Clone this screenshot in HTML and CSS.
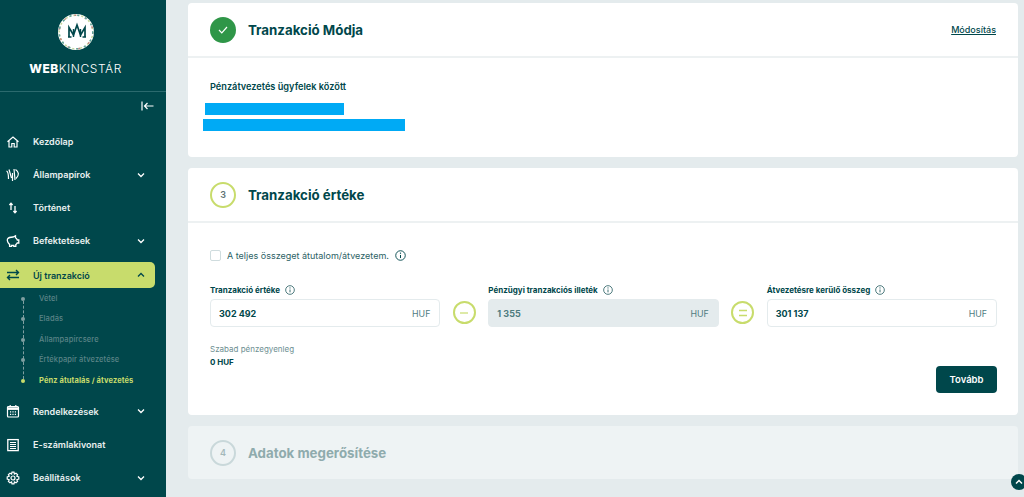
FILE: index.html
```html
<!DOCTYPE html>
<html lang="hu">
<head>
    <meta charset="UTF-8">
    <meta name="viewport" content="width=device-width, initial-scale=1.0">
    <title>WebKincstár</title>
    <link rel="stylesheet" href="styles.css">
</head>
<body>

<aside class="sidebar">
    <div class="brand">
        <svg class="brand-logo" width="38" height="38" viewBox="0 0 38 38">
            <circle cx="19" cy="19" r="18" fill="#fff"/>
            <circle cx="19" cy="19" r="16.8" fill="none" stroke="#c5d89a" stroke-width="1.5" stroke-dasharray="2 2"/>
            <circle cx="19" cy="19" r="16.8" fill="none" stroke="#c08a80" stroke-width="1.5" stroke-dasharray="2 9"/>
            <circle cx="19" cy="19" r="16.8" fill="none" stroke="#5ea3a0" stroke-width="1.5" stroke-dasharray="2 6"/>
            <path d="M12 24V14.5L16.5 22L20 12L23.5 22L28 14.5V24" fill="none" stroke="#00474b" stroke-width="1.7"/>
            <path d="M11 24H14.5M25.5 24H29M16.5 16V24M23.5 16V24" fill="none" stroke="#00474b" stroke-width="1.4"/>
        </svg>
        <div class="brand-name"><b>WEB</b>KINCSTÁR</div>
    </div>

    <div class="collapse-row">
        <svg width="13" height="10" viewBox="0 0 13 10" fill="none" stroke="#fff" stroke-width="1.2">
            <path d="M1 0.5V9.5M12.5 5H3.5M6.5 2L3.5 5L6.5 8"/>
        </svg>
    </div>

    <nav>
        <a class="nav-item">
            <svg class="nav-icon" viewBox="0 0 14 14" fill="none" stroke="#fff" stroke-width="1.2">
                <path d="M1.5 6.8L7 2L12.5 6.8M3 5.8V12H5.8V8.5H8.2V12H11V5.8"/>
            </svg>
            <span class="nav-label">Kezdőlap</span>
        </a>
        <a class="nav-item">
            <svg class="nav-icon" viewBox="0 0 14 14" fill="none" stroke="#fff" stroke-width="1.2">
                <path d="M0.5 3C2 3.5 2.5 6 2.5 11M3 1.5L5.5 10M6.5 5V13M8 1L9 12M9.5 1.5C13 4 13.5 7 10 10.5"/>
            </svg>
            <span class="nav-label">Állampapírok</span>
            <svg class="chevron" viewBox="0 0 8 6" fill="none" stroke="#fff" stroke-width="1.3"><path d="M1 1.5L4 4.5L7 1.5"/></svg>
        </a>
        <a class="nav-item">
            <svg class="nav-icon" viewBox="0 0 14 14" fill="none" stroke="#fff" stroke-width="1.3">
                <path d="M5 9V2.5M3.4 4L5 2.2L6.6 4M9 5V11.5M7.4 10L9 11.8L10.6 10"/>
            </svg>
            <span class="nav-label">Történet</span>
        </a>
        <a class="nav-item">
            <svg class="nav-icon" viewBox="0 0 14 14" fill="none" stroke="#fff" stroke-width="1.3">
                <path d="M1.5 5C2.5 3.5 5 3 7 3L9.5 1.8V3.8C10.5 4.4 11 5.2 11.3 6H12.8V9H11.2C10.8 9.8 10.3 10.3 9.8 10.6V12.3H7.8V11.3H5.6V12.3H3.6V10.4C2.2 9.4 0.8 6.6 1.5 5Z"/>
            </svg>
            <span class="nav-label">Befektetések</span>
            <svg class="chevron" viewBox="0 0 8 6" fill="none" stroke="#fff" stroke-width="1.3"><path d="M1 1.5L4 4.5L7 1.5"/></svg>
        </a>
        <div class="nav-active-row">
            <a class="nav-item nav-item-active">
                <svg class="nav-icon" viewBox="0 0 14 14" fill="none" stroke="#00474b" stroke-width="1.4">
                    <path d="M1 4.5H12.5M10 2L12.5 4.5L10 7M13 9.5H1.5M4 7L1.5 9.5L4 12"/>
                </svg>
                <span class="nav-label">Új tranzakció</span>
                <svg class="chevron" viewBox="0 0 8 6" fill="none" stroke="#00474b" stroke-width="1.3"><path d="M1 4.5L4 1.5L7 4.5"/></svg>
            </a>
        </div>
        <ul class="subnav">
            <li class="subnav-item">Vétel</li>
            <li class="subnav-item">Eladás</li>
            <li class="subnav-item">Állampapírcsere</li>
            <li class="subnav-item">Értékpapír átvezetése</li>
            <li class="subnav-item subnav-item-active">Pénz átutalás / átvezetés</li>
        </ul>
        <a class="nav-item">
            <svg class="nav-icon" viewBox="0 0 14 14" fill="none" stroke="#fff" stroke-width="1.2">
                <rect x="1.5" y="2.5" width="11" height="10.5" rx="1"/>
                <path d="M1.5 4.6H12.5" stroke-width="2.6"/>
                <path d="M4.2 1V3M9.8 1V3"/>
                <path d="M4 7.8H5.2M6.4 7.8H7.6M8.8 7.8H10M4 10.4H5.2M6.4 10.4H7.6M8.8 10.4H10"/>
            </svg>
            <span class="nav-label">Rendelkezések</span>
            <svg class="chevron" viewBox="0 0 8 6" fill="none" stroke="#fff" stroke-width="1.3"><path d="M1 1.5L4 4.5L7 1.5"/></svg>
        </a>
        <a class="nav-item">
            <svg class="nav-icon" viewBox="0 0 14 14" fill="none" stroke="#fff" stroke-width="1.3">
                <rect x="1.8" y="1.6" width="10.4" height="11"/>
                <path d="M4 4.5H10M4 6.5H10M4 8.5H10M4 10.5H10" stroke-width="1.1"/>
            </svg>
            <span class="nav-label">E-számlakivonat</span>
        </a>
        <a class="nav-item">
            <svg class="nav-icon" viewBox="0 0 14 14" fill="none" stroke="#fff" stroke-width="1.2">
                <circle cx="7" cy="7" r="2"/>
                <path d="M6 1.2H8L8.4 3L10 2.2L11.6 3.6L10.8 5.2L12.8 6V8L10.8 8.8L11.6 10.4L10 11.8L8.4 11L8 12.8H6L5.6 11L4 11.8L2.4 10.4L3.2 8.8L1.2 8V6L3.2 5.2L2.4 3.6L4 2.2L5.6 3Z"/>
            </svg>
            <span class="nav-label">Beállítások</span>
            <svg class="chevron" viewBox="0 0 8 6" fill="none" stroke="#fff" stroke-width="1.3"><path d="M1 1.5L4 4.5L7 1.5"/></svg>
        </a>
    </nav>
</aside>

<main class="content">

    <section class="card">
        <header class="card-header">
            <span class="step step-done">
                <svg width="10" height="8" viewBox="0 0 10 8" fill="none" stroke="#fff" stroke-width="1.2"><path d="M1 4L3.8 6.8L9 1"/></svg>
            </span>
            <h2 class="card-title">Tranzakció Módja</h2>
            <a class="edit-link">Módosítás</a>
        </header>
        <div class="method-body">
            <p class="method-name">Pénzátvezetés ügyfelek között</p>
            <div class="mask mask-short"></div>
            <div class="mask mask-long"></div>
        </div>
    </section>

    <section class="card">
        <header class="card-header">
            <span class="step step-current">3</span>
            <h2 class="card-title">Tranzakció értéke</h2>
        </header>
        <div class="value-body">
            <div class="check-row">
                <span class="checkbox"></span>
                <span class="check-label">A teljes összeget átutalom/átvezetem.</span>
                <svg class="info info-large" viewBox="0 0 12 12"><use href="#info"/></svg>
            </div>

            <div class="fields">
                <div class="field">
                    <label class="field-label">Tranzakció értéke <svg class="info" viewBox="0 0 12 12"><use href="#info"/></svg></label>
                    <div class="input"><b>302 492</b><span class="unit">HUF</span></div>
                </div>
                <span class="operator">
                    <svg width="10" height="8" viewBox="0 0 10 8" stroke="#c8dc6c" stroke-width="1.2"><path d="M1 4H9"/></svg>
                </span>
                <div class="field">
                    <label class="field-label">Pénzügyi tranzakciós illeték <svg class="info" viewBox="0 0 12 12"><use href="#info"/></svg></label>
                    <div class="input input-disabled"><b>1 355</b><span class="unit">HUF</span></div>
                </div>
                <span class="operator">
                    <svg width="12" height="8" viewBox="0 0 12 8" stroke="#c8dc6c" stroke-width="1.6"><path d="M2 1.5H10M2 6.5H10"/></svg>
                </span>
                <div class="field">
                    <label class="field-label">Átvezetésre kerülő összeg <svg class="info" viewBox="0 0 12 12"><use href="#info"/></svg></label>
                    <div class="input"><b>301 137</b><span class="unit">HUF</span></div>
                </div>
            </div>

            <div class="balance-row">
                <div class="balance">
                    <div class="balance-label">Szabad pénzegyenleg</div>
                    <div class="balance-value">0 HUF</div>
                </div>
                <button class="next-btn">Tovább</button>
            </div>
        </div>
    </section>

    <section class="card card-disabled">
        <header class="card-header card-header-plain">
            <span class="step step-todo">4</span>
            <h2 class="card-title">Adatok megerősítése</h2>
        </header>
    </section>
</main>

<button class="to-top">
    <svg width="8" height="6" viewBox="0 0 8 6" fill="none" stroke="#fff" stroke-width="1.5"><path d="M1 4.5L4 1.5L7 4.5"/></svg>
</button>

<svg class="sprite" width="0" height="0">
    <symbol id="info" viewBox="0 0 12 12">
        <circle cx="6" cy="6" r="5.2" fill="none" stroke="currentColor" stroke-width="1"/>
        <path d="M6 5.4V8.8" stroke="currentColor" stroke-width="1.1"/>
        <circle cx="6" cy="3.5" r="0.7" fill="currentColor"/>
    </symbol>
</svg>

</body>
</html>
```

FILE: styles.css
```css
/* Basic Reset */
* {
    margin: 0;
    padding: 0;
    box-sizing: border-box;
}

body {
    font-family: Inter, "Noto Sans", sans-serif;
    background-color: #e4ebed;
    color: #00474b;
    display: flex;
    height: 497px;
    overflow: hidden;
}

/* Sidebar */
.sidebar {
    width: 166px;
    flex-shrink: 0;
    background-color: #00474b;
    color: #fff;
}

.brand {
    height: 92px;
    border-bottom: 1px solid #2b6a6e;
    padding-top: 13px;
    padding-right: 15px;
    display: flex;
    flex-direction: column;
    align-items: center;
}

.brand-name {
    margin-top: 10px;
    font-size: 12px;
    line-height: 15px;
    letter-spacing: 0.55px;
    font-weight: 300;
}

.brand-name b {
    font-weight: 800;
}

.collapse-row {
    height: 33px;
    display: flex;
    justify-content: flex-end;
    align-items: center;
    padding-right: 12px;
    padding-bottom: 6px;
}

.nav-item {
    height: 33px;
    display: flex;
    align-items: center;
    padding-left: 6px;
    font-size: 9px;
    font-weight: 600;
    color: #e9f0f0;
}

.nav-icon {
    width: 14px;
    height: 14px;
    margin-right: 13px;
    flex-shrink: 0;
}

.nav-label {
    flex: 1;
}

.chevron {
    width: 8px;
    height: 6px;
    margin-right: 21px;
}

.nav-active-row {
    height: 31px;
    padding-top: 5px;
}

.nav-item-active {
    width: 155px;
    height: 26px;
    background-color: #c8dc6c;
    border-radius: 0 5px 5px 0;
    color: #00474b;
}

.nav-item-active .chevron {
    margin-right: 10px;
}

.subnav {
    list-style: none;
    padding-top: 0.5px;
    margin-bottom: 3px;
}

.subnav + .nav-item {
    height: 34px;
}

.subnav-item {
    height: 20.5px;
    line-height: 20.5px;
    padding-left: 39px;
    font-size: 7.5px;
    font-weight: 500;
    letter-spacing: 0.1px;
    color: #5b8487;
    position: relative;
}

/* dots and dashed line of the sub menu */
.subnav-item::before {
    content: "";
    position: absolute;
    left: 21px;
    top: 8px;
    width: 4px;
    height: 4px;
    border-radius: 50%;
    background-color: #7f9fa1;
}

.subnav-item::after {
    content: "";
    position: absolute;
    left: 22.5px;
    top: 12px;
    height: 17px;
    border-left: 1px dashed #7f9fa1;
}

.subnav-item-active {
    color: #c8dc6c;
    font-weight: 700;
}

.subnav-item-active::before {
    background-color: #c8dc6c;
}

.subnav-item-active::after {
    display: none;
}

/* Main column */
.content {
    flex: 1;
    padding: 3px 6px 0 22px;
    display: flex;
    flex-direction: column;
    gap: 11px;
}

.card {
    background-color: #fff;
    border-radius: 4px;
}

.card-header {
    height: 55px;
    border-bottom: 2px solid #edf1f2;
    display: flex;
    align-items: center;
    padding: 0 22px;
}

.card-header-plain {
    height: 53px;
    border-bottom: none;
}

.card-title {
    font-size: 13.3px;
    font-weight: 700;
    margin-left: 12px;
}

.edit-link {
    margin-left: auto;
    font-size: 9px;
    font-weight: 500;
    text-decoration: underline;
}

.step {
    width: 26px;
    height: 26px;
    border-radius: 50%;
    display: flex;
    align-items: center;
    justify-content: center;
    font-size: 9px;
    font-weight: 600;
    flex-shrink: 0;
}

.step-done {
    background-color: #2f9648;
}

.step-current {
    border: 2px solid #c8dc6c;
    color: #5e7274;
}

.step-todo {
    border: 2px solid #c9d8da;
    color: #a3b8ba;
}

/* Card 1 */
.method-body {
    height: 99px;
    padding: 23px 22px 0;
}

.method-name {
    font-size: 9.2px;
    line-height: 12px;
    font-weight: 600;
    margin-bottom: 10px;
}

.mask {
    height: 12px;
    background-color: #00aaf5;
}

.mask-short {
    width: 139px;
    margin-left: -5px;
    margin-bottom: 4px;
}

.mask-long {
    width: 202px;
    margin-left: -7px;
}

/* Card 2 */
.value-body {
    height: 192px;
    padding: 27px 21px 0 22px;
}

.check-row {
    display: flex;
    align-items: center;
    height: 11px;
}

.checkbox {
    width: 11px;
    height: 11px;
    border: 1px solid #cfdcde;
    border-radius: 2px;
    margin-right: 6px;
}

.check-label {
    font-size: 9px;
    color: #2c6265;
    margin-right: 6px;
}

.info {
    width: 10px;
    height: 10px;
    color: #2c6265;
    margin-left: 3px;
    vertical-align: -2px;
}

.info-large {
    width: 11px;
    height: 11px;
    color: #00474b;
    margin-left: 0;
}

.fields {
    display: grid;
    grid-template-columns: 1fr 23px 1fr 23px 1fr;
    column-gap: 12.5px;
    align-items: end;
    margin-top: 23px;
}

.field-label {
    display: block;
    font-size: 8px;
    line-height: 12px;
    font-weight: 700;
    margin-bottom: 3px;
}

.input {
    height: 28px;
    border: 1px solid #e4ebed;
    border-radius: 4px;
    display: flex;
    align-items: center;
    justify-content: space-between;
    padding: 0 9px 0 8px;
    font-size: 9px;
}

.input b {
    font-weight: 700;
}

.input-disabled {
    background-color: #e4ebed;
}

.input-disabled b {
    color: #4f7c7f;
}

.unit {
    font-size: 8.8px;
    color: #4f7c7f;
}

.operator {
    width: 23px;
    height: 23px;
    margin-bottom: 3px;
    border: 2px solid #c8dc6c;
    border-radius: 50%;
    display: flex;
    align-items: center;
    justify-content: center;
}

.balance-row {
    display: flex;
    justify-content: space-between;
    align-items: flex-start;
    margin-top: 17px;
}

.balance-label {
    font-size: 8px;
    line-height: 11px;
    color: #6e8f92;
}

.balance-value {
    font-size: 8px;
    line-height: 11px;
    font-weight: 700;
    margin-top: 2px;
}

.next-btn {
    font-family: inherit;
    width: 61px;
    height: 27px;
    margin-top: 22px;
    background-color: #00474b;
    color: #fff;
    border: none;
    border-radius: 4px;
    font-size: 9.5px;
    font-weight: 600;
}

/* Card 3 */
.card-disabled {
    background-color: #eef3f4;
}

.card-disabled .card-title {
    color: #8fabad;
}

.to-top {
    position: fixed;
    right: -3px;
    top: 474px;
    width: 16px;
    height: 16px;
    border: none;
    border-radius: 50%;
    background-color: #00474b;
    display: flex;
    align-items: center;
    justify-content: center;
}

.sprite {
    position: absolute;
}
```
